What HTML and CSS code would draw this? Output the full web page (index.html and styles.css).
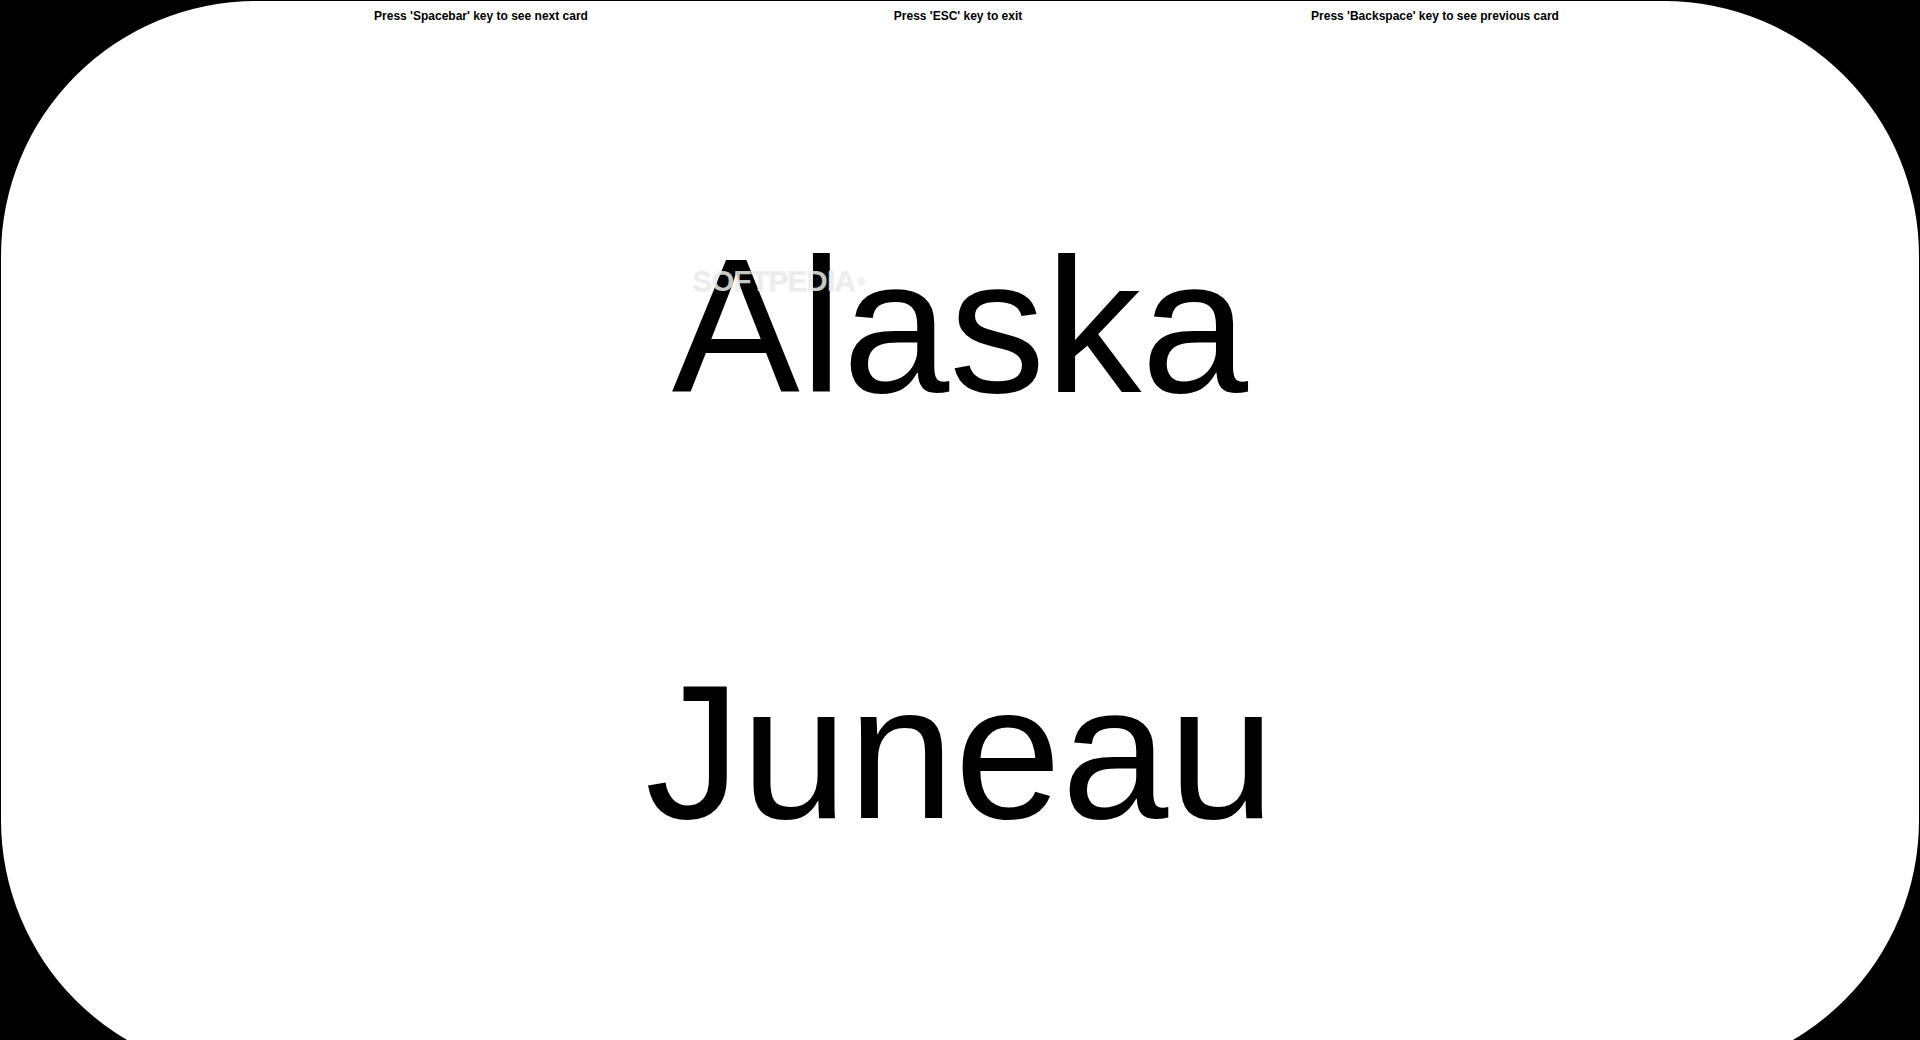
FILE: index.html
```html
<!DOCTYPE html>
<html lang="en">
<head>
<meta charset="utf-8">
<title>Flash Cards</title>
<link rel="stylesheet" href="styles.css">
</head>
<body>
<main class="card">
  <header class="hints">
    <span class="hint">Press 'Spacebar' key to see next card</span>
    <span class="hint">Press 'ESC' key to exit</span>
    <span class="hint">Press 'Backspace' key to see previous card</span>
  </header>
  <div class="term term-question">Alaska</div>
  <div class="term term-answer">Juneau</div>
  <div class="watermark">SOFTPEDIA<sup class="reg">®</sup></div>
</main>
</body>
</html>
```

FILE: styles.css
```css
html, body {
  margin: 0;
  padding: 0;
}

body {
  width: 1920px;
  height: 1040px;
  overflow: hidden;
  background: #000;
  font-family: "Liberation Sans", Arial, sans-serif;
}

.card {
  position: relative;
  margin: 1px 1px 0;
  height: 1074px;
  background: #fff;
  border-radius: 255px;
  display: flex;
  flex-direction: column;
  align-items: center;
}

.hints {
  display: grid;
  grid-template-columns: repeat(3, 477px);
  margin-top: 8px;
  padding-right: 4px;
  font-weight: bold;
  font-size: 12px;
  line-height: 14px;
  color: #000;
  text-align: center;
  white-space: nowrap;
}

.term {
  font-size: 192px;
  line-height: 214px;
  color: #000;
  white-space: nowrap;
}

.term-question {
  margin-top: 196px;
}

.term-answer {
  margin-top: 212px;
}

.watermark {
  position: absolute;
  left: 691px;
  top: 265px;
  font-size: 30px;
  line-height: 30px;
  font-weight: bold;
  letter-spacing: -1px;
  color: rgba(236, 236, 236, 0.85);
  text-shadow: 1px 1px 1px rgba(0, 0, 0, 0.06);
  pointer-events: none;
}

.reg {
  font-size: 11px;
  vertical-align: top;
  margin-left: 2px;
}
```
